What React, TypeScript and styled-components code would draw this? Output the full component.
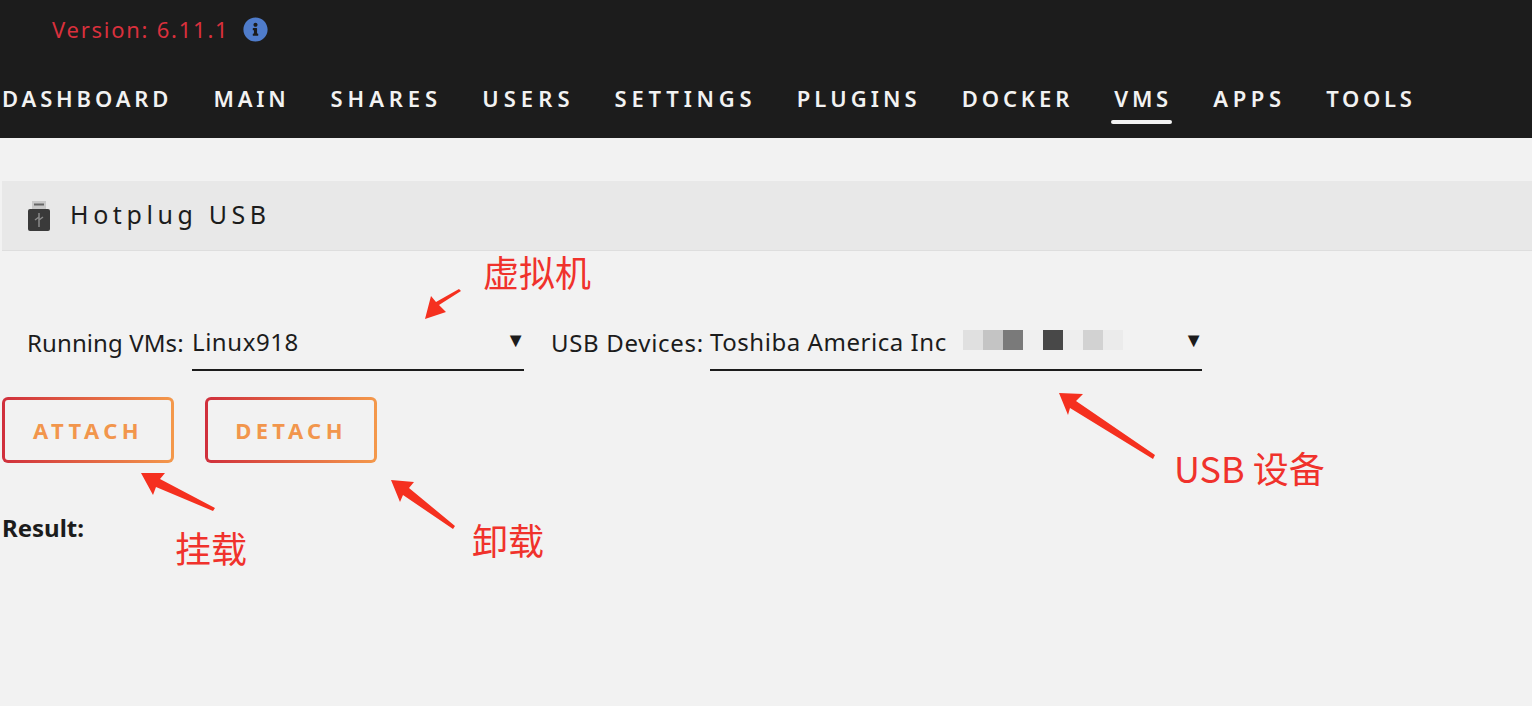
import React from 'react';
import styled, { createGlobalStyle } from 'styled-components';
import { FaInfoCircle } from 'react-icons/fa';

const navItems = [
  { label: 'DASHBOARD', spacing: 3.85 },
  { label: 'MAIN', spacing: 3.8 },
  { label: 'SHARES', spacing: 4.9 },
  { label: 'USERS', spacing: 5.1 },
  { label: 'SETTINGS', spacing: 4.8 },
  { label: 'PLUGINS', spacing: 4.1 },
  { label: 'DOCKER', spacing: 3.9 },
  { label: 'VMS', spacing: 3.7 },
  { label: 'APPS', spacing: 4.7 },
  { label: 'TOOLS', spacing: 3.7 },
];
const mosaic = ['#e0e0e0', '#c4c4c4', '#7a7a7a', '#f0f0f0', '#484848', '#eeeeee', '#d2d2d2', '#ebebeb'];

const GlobalStyle = createGlobalStyle`
  html, body {
    margin: 0;
    height: 100%;
    background: #f2f2f2;
    overflow: hidden;
  }
  body {
    font-family: 'Noto Sans', 'Liberation Sans', sans-serif;
    color: #1c1c1c;
  }
`;

const Page = styled.div`
  position: relative;
  width: 1532px;
  height: 706px;
  overflow: hidden;
`;

const Header = styled.header`
  height: 138px;
  box-sizing: border-box;
  padding: 13px 0 0 2px;
  background: #1c1c1c;
`;

const VersionRow = styled.div`
  display: flex;
  align-items: center;
  gap: 14px;
  height: 32px;
  padding-left: 50px;
  font-size: 22px;
  letter-spacing: 1.75px;
  color: #d9303c;

  svg {
    color: #4f7ccb;
    font-size: 25px;
  }
`;

const Nav = styled.nav`
  display: flex;
  margin-top: 24px;
`;

const NavItem = styled.a<{ $active?: boolean; $spacing: number }>`
  position: relative;
  margin-right: ${({ $spacing }) => 45 - $spacing}px;
  font-size: 22px;
  font-weight: 600;
  line-height: 58px;
  letter-spacing: ${({ $spacing }) => $spacing}px;
  color: #f2f2f2;

  &:after {
    content: '';
    display: ${({ $active }) => ($active ? 'block' : 'none')};
    position: absolute;
    left: -3px;
    right: 0;
    bottom: 3px;
    height: 4px;
    border-radius: 2px;
    background: #f2f2f2;
  }
`;

const TitleBar = styled.div`
  display: flex;
  align-items: center;
  gap: 18px;
  height: 69px;
  margin: 43px 0 0 2px;
  padding-left: 24px;
  background: #e8e8e8;
  border-bottom: 1px solid #dedede;
`;

const Title = styled.h2`
  margin: -3px 0 0;
  font-size: 25px;
  font-weight: 400;
  letter-spacing: 4.6px;
`;

const Form = styled.div`
  display: flex;
  align-items: flex-end;
  gap: 27px;
  margin-top: 73px;
  padding-left: 27px;
`;

const Field = styled.label`
  display: flex;
  align-items: flex-end;
  font-size: 24px;
  line-height: 36px;
`;

const FieldLabel = styled.span<{ $width: number; $spacing: number }>`
  width: ${({ $width }) => $width}px;
  padding-bottom: 10px;
  letter-spacing: ${({ $spacing }) => $spacing}px;
`;

const Select = styled.div<{ $width: number }>`
  display: flex;
  align-items: center;
  justify-content: space-between;
  width: ${({ $width }) => $width}px;
  height: 47px;
  padding-bottom: 10px;
  box-sizing: border-box;
  border-bottom: 2px solid #1c1c1c;
  letter-spacing: 0.55px;
`;

const SelectValue = styled.span`
  display: flex;
  align-items: center;
`;

const Caret = styled.span`
  margin: 0 -2px 3px 0;
  font-size: 20px;
  line-height: 1;
`;

const Mosaic = styled.span`
  display: flex;
  margin-left: 16px;
`;

const MosaicCell = styled.i<{ $color: string }>`
  width: 20px;
  height: 20px;
  margin-top: -3px;
  background: ${({ $color }) => $color};
`;

const Actions = styled.div`
  display: flex;
  gap: 31px;
  margin: 26px 0 0 2px;
`;

const Button = styled.button`
  width: 172px;
  height: 66px;
  border: 3.5px solid transparent;
  border-radius: 6px;
  background:
    linear-gradient(#f2f2f2, #f2f2f2) padding-box,
    linear-gradient(90deg, #d02f3c, #f4994b) border-box;
  color: #f2964c;
  font-family: inherit;
  font-size: 22px;
  font-weight: 700;
  letter-spacing: 4.4px;
`;

const Result = styled.div`
  margin: 50px 0 0 2px;
  font-size: 24px;
  font-weight: 700;
  line-height: 30px;
`;

const Arrows = styled.svg`
  position: absolute;
  inset: 0;
  pointer-events: none;
`;

const Note = styled.span<{ $x: number; $y: number }>`
  position: absolute;
  left: ${({ $x }) => $x}px;
  top: ${({ $y }) => $y}px;
  font-family: 'Noto Sans CJK SC', 'Noto Sans', sans-serif;
  font-size: 36px;
  line-height: 1;
  color: #f0322c;
  white-space: nowrap;
`;

const UsbIcon = () => (
  <svg width="26" height="32" viewBox="0 0 26 32">
    <rect x="6" y="1" width="14" height="8" fill="#c8c8c8" />
    <rect x="8" y="3.5" width="10" height="2" fill="#666" />
    <rect x="2" y="9" width="22" height="22" rx="2" fill="#3a3a3a" />
    <path d="M13 13v14M13 17l-4 3M13 20l4-3" stroke="#8a8a8a" strokeWidth="1.5" fill="none" />
  </svg>
);

const App = () => {
  return (
    <Page>
      <GlobalStyle />
      <Header>
        <VersionRow>
          <span>Version: 6.11.1</span>
          <FaInfoCircle />
        </VersionRow>
        <Nav>
          {navItems.map((item) => (
            <NavItem key={item.label} $active={item.label === 'VMS'} $spacing={item.spacing}>
              {item.label}
            </NavItem>
          ))}
        </Nav>
      </Header>

      <TitleBar>
        <UsbIcon />
        <Title>Hotplug USB</Title>
      </TitleBar>

      <Form>
        <Field>
          <FieldLabel $width={165} $spacing={0.1}>Running VMs:</FieldLabel>
          <Select $width={332}>
            <SelectValue>Linux918</SelectValue>
            <Caret>▼</Caret>
          </Select>
        </Field>
        <Field>
          <FieldLabel $width={159} $spacing={0.7}>USB Devices:</FieldLabel>
          <Select $width={492}>
            <SelectValue>
              Toshiba America Inc
              <Mosaic>
                {mosaic.map((color, i) => (
                  <MosaicCell key={i} $color={color} />
                ))}
              </Mosaic>
            </SelectValue>
            <Caret>▼</Caret>
          </Select>
        </Field>
      </Form>

      <Actions>
        <Button>ATTACH</Button>
        <Button>DETACH</Button>
      </Actions>

      <Result>Result:</Result>

      <Arrows width="1532" height="706" viewBox="0 0 1532 706">
        <polygon fill="#f5301f" points="425,319 446,312 439,305 461,291 459,289 436,302 431,296" />
        <polygon fill="#f5301f" points="1059,393 1083,394 1076,401 1155,455 1153,459 1070,408 1068,415" />
        <polygon fill="#f5301f" points="141,473 165,473 160,479 215,508 213,511 156,487 153,495" />
        <polygon fill="#f5301f" points="391,480 414,482 409,488 455,526 453,529 403,495 400,502" />
      </Arrows>
      <Note $x={483} $y={253}>虚拟机</Note>
      <Note $x={1174} $y={449}>USB 设备</Note>
      <Note $x={175} $y={529}>挂载</Note>
      <Note $x={472} $y={521}>卸载</Note>
    </Page>
  );
};

export default App;
